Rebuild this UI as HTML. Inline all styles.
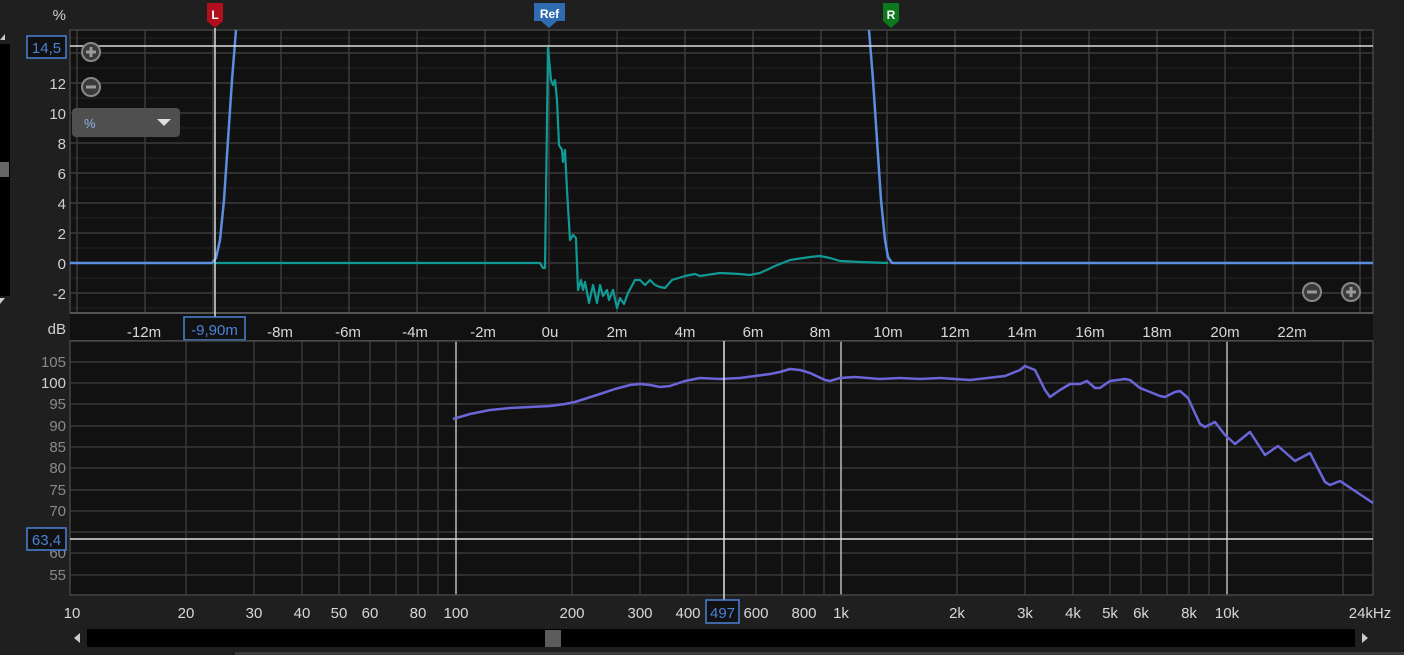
<!DOCTYPE html><html><head><meta charset="utf-8"><style>
body{margin:0;background:#1f1f1f;width:1404px;height:655px;overflow:hidden;font-family:"Liberation Sans",sans-serif}
svg{display:block}
text{font-family:"Liberation Sans",sans-serif}
</style></head><body>
<svg width="1404" height="655" viewBox="0 0 1404 655">
<rect width="1404" height="655" fill="#1f1f1f"/>
<!-- left scrollbar -->
<rect x="0" y="44" width="10" height="252" fill="#000"/>
<rect x="0" y="162" width="9" height="15" fill="#666"/>
<polygon points="0,40 5,34 5,40" fill="#ccc"/>
<polygon points="0,298 5,298 0,304" fill="#ccc"/>
<!-- top plot -->
<rect x="70" y="30" width="1303" height="311" fill="#111"/>
<g stroke="#252525" stroke-width="1">
<line x1="70" x2="1373" y1="38" y2="38"/><line x1="70" x2="1373" y1="68" y2="68"/><line x1="70" x2="1373" y1="98" y2="98"/><line x1="70" x2="1373" y1="128" y2="128"/><line x1="70" x2="1373" y1="158" y2="158"/><line x1="70" x2="1373" y1="188" y2="188"/><line x1="70" x2="1373" y1="218" y2="218"/><line x1="70" x2="1373" y1="248" y2="248"/><line x1="70" x2="1373" y1="278" y2="278"/><line x1="70" x2="1373" y1="308" y2="308"/>
</g>
<g stroke="#3a3a3a" stroke-width="1.5">
<line x1="70" x2="1373" y1="53" y2="53"/><line x1="70" x2="1373" y1="83" y2="83"/><line x1="70" x2="1373" y1="113" y2="113"/><line x1="70" x2="1373" y1="143" y2="143"/><line x1="70" x2="1373" y1="173" y2="173"/><line x1="70" x2="1373" y1="203" y2="203"/><line x1="70" x2="1373" y1="233" y2="233"/><line x1="70" x2="1373" y1="263" y2="263"/><line x1="70" x2="1373" y1="293" y2="293"/>
<line x1="77" x2="77" y1="30" y2="313"/><line x1="145" x2="145" y1="30" y2="313"/><line x1="213" x2="213" y1="30" y2="313"/><line x1="281" x2="281" y1="30" y2="313"/><line x1="349" x2="349" y1="30" y2="313"/><line x1="417" x2="417" y1="30" y2="313"/><line x1="485" x2="485" y1="30" y2="313"/><line x1="549" x2="549" y1="30" y2="313"/><line x1="617" x2="617" y1="30" y2="313"/><line x1="685" x2="685" y1="30" y2="313"/><line x1="753" x2="753" y1="30" y2="313"/><line x1="821" x2="821" y1="30" y2="313"/><line x1="887" x2="887" y1="30" y2="313"/><line x1="955" x2="955" y1="30" y2="313"/><line x1="1021" x2="1021" y1="30" y2="313"/><line x1="1089" x2="1089" y1="30" y2="313"/><line x1="1157" x2="1157" y1="30" y2="313"/><line x1="1225" x2="1225" y1="30" y2="313"/><line x1="1293" x2="1293" y1="30" y2="313"/><line x1="1360" x2="1360" y1="30" y2="313"/>
</g>
<rect x="70" y="30" width="1303" height="283" fill="none" stroke="#444" stroke-width="1.5"/>
<line x1="70" x2="1373" y1="313" y2="313" stroke="#555" stroke-width="2"/>
<line x1="70" x2="1373" y1="341" y2="341" stroke="#555" stroke-width="2"/>
<!-- curves top -->
<polyline fill="none" stroke="#5b8ee0" stroke-width="2.5" points="70,263 212,263 216,258 220,240 224,200 228,140 232,80 236,30"/>
<polyline fill="none" stroke="#5b8ee0" stroke-width="2.5" points="869,30 873,80 877,140 881,200 885,240 888,257 892,263 1373,263"/>
<polyline fill="none" stroke="#0f9a96" stroke-width="2.2" stroke-linejoin="round" points="215,263 540,263 543,268 545,268 548,48 551,80 553,85 555,80 557,100 559,145 562,150 563,162 565,150 567,190 570,240 573,235 576,238 578,290 581,280 583,290 585,282 589,303 593,285 597,303 600,285 603,296 607,290 609,300 613,290 617,308 620,298 624,304 628,293 635,280 640,280 645,285 650,280 655,285 660,287 665,288 672,280 685,276 695,274 700,276 720,273 740,274 750,275 760,273 775,266 790,260 810,257 820,256 830,258 840,261 860,262 888,263"/>
<!-- cursors top -->
<line x1="70" x2="1373" y1="46" y2="46" stroke="#ddd" stroke-width="1.5"/>
<line x1="215" x2="215" y1="28" y2="320" stroke="#ddd" stroke-width="1.5"/>
<!-- markers -->
<path d="M207,3 h16 v18 l-8,7 l-8,-7z" fill="#b0101c"/><text x="215" y="19" fill="#fff" font-size="12" font-weight="bold" text-anchor="middle">L</text>
<path d="M534,3 h31 v18 h-8 l-8,7 l-8,-7 h-7z" fill="#2e6bb0"/><text x="549.5" y="18" fill="#fff" font-size="12" font-weight="bold" text-anchor="middle">Ref</text>
<path d="M883,3 h16 v18 l-8,7 l-8,-7z" fill="#0c7a1c"/><text x="891" y="19" fill="#fff" font-size="12" font-weight="bold" text-anchor="middle">R</text>
<!-- top y labels -->
<g fill="#d0d0d0" font-size="15" text-anchor="end">
<text x="66" y="20">%</text>
<text x="66" y="89">12</text><text x="66" y="119">10</text><text x="66" y="149">8</text><text x="66" y="179">6</text><text x="66" y="209">4</text><text x="66" y="239">2</text><text x="66" y="269">0</text><text x="66" y="299">-2</text>
<text x="66" y="334">dB</text>
</g>
<rect x="27" y="36" width="39" height="22" fill="#111" stroke="#4a82d6" stroke-width="1.5"/>
<text x="46.5" y="53" fill="#4a82d6" font-size="15" text-anchor="middle">14,5</text>
<!-- zoom buttons -->
<g fill="#3a3a3a" stroke="#888" stroke-width="2">
<circle cx="91" cy="52" r="9"/><circle cx="91" cy="87" r="9"/><circle cx="1312" cy="292" r="9"/><circle cx="1351" cy="292" r="9"/>
</g>
<g stroke="#999" stroke-width="3">
<line x1="86" x2="96" y1="52" y2="52"/><line x1="91" x2="91" y1="47" y2="57"/>
<line x1="86" x2="96" y1="87" y2="87"/>
<line x1="1307" x2="1317" y1="292" y2="292"/>
<line x1="1346" x2="1356" y1="292" y2="292"/><line x1="1351" x2="1351" y1="287" y2="297"/>
</g>
<!-- dropdown -->
<rect x="72" y="108" width="108" height="29" rx="4" fill="#4f4f4f"/>
<text x="84" y="128" fill="#8fb4e8" font-size="13">%</text>
<polygon points="157,119 171,119 164,126" fill="#e0e0e0"/>
<!-- top x labels -->
<g fill="#d8d8d8" font-size="15" text-anchor="middle">
<text x="144" y="337">-12m</text><text x="280" y="337">-8m</text><text x="348" y="337">-6m</text><text x="415" y="337">-4m</text><text x="483" y="337">-2m</text><text x="550" y="337">0u</text><text x="617" y="337">2m</text><text x="685" y="337">4m</text><text x="753" y="337">6m</text><text x="820" y="337">8m</text><text x="888" y="337">10m</text><text x="955" y="337">12m</text><text x="1022" y="337">14m</text><text x="1090" y="337">16m</text><text x="1157" y="337">18m</text><text x="1225" y="337">20m</text><text x="1292" y="337">22m</text>
</g>
<rect x="184" y="317" width="61" height="23" fill="#111" stroke="#4a82d6" stroke-width="1.5"/>
<text x="214.5" y="335" fill="#4a82d6" font-size="15" text-anchor="middle">-9,90m</text>
<!-- bottom plot -->
<rect x="70" y="341" width="1303" height="254" fill="#111"/>
<g stroke="#383838" stroke-width="1.5">
<line x1="70" x2="1373" y1="362" y2="362"/><line x1="70" x2="1373" y1="383" y2="383"/><line x1="70" x2="1373" y1="404" y2="404"/><line x1="70" x2="1373" y1="426" y2="426"/><line x1="70" x2="1373" y1="447" y2="447"/><line x1="70" x2="1373" y1="468" y2="468"/><line x1="70" x2="1373" y1="490" y2="490"/><line x1="70" x2="1373" y1="511" y2="511"/><line x1="70" x2="1373" y1="532" y2="532"/><line x1="70" x2="1373" y1="553" y2="553"/><line x1="70" x2="1373" y1="575" y2="575"/>
<line x1="186" x2="186" y1="341" y2="595"/><line x1="254" x2="254" y1="341" y2="595"/><line x1="302" x2="302" y1="341" y2="595"/><line x1="339" x2="339" y1="341" y2="595"/><line x1="370" x2="370" y1="341" y2="595"/><line x1="396" x2="396" y1="341" y2="595"/><line x1="418" x2="418" y1="341" y2="595"/><line x1="438" x2="438" y1="341" y2="595"/>
<line x1="572" x2="572" y1="341" y2="595"/><line x1="640" x2="640" y1="341" y2="595"/><line x1="688" x2="688" y1="341" y2="595"/><line x1="756" x2="756" y1="341" y2="595"/><line x1="782" x2="782" y1="341" y2="595"/><line x1="804" x2="804" y1="341" y2="595"/><line x1="824" x2="824" y1="341" y2="595"/>
<line x1="957" x2="957" y1="341" y2="595"/><line x1="1025" x2="1025" y1="341" y2="595"/><line x1="1073" x2="1073" y1="341" y2="595"/><line x1="1110" x2="1110" y1="341" y2="595"/><line x1="1141" x2="1141" y1="341" y2="595"/><line x1="1167" x2="1167" y1="341" y2="595"/><line x1="1189" x2="1189" y1="341" y2="595"/><line x1="1209" x2="1209" y1="341" y2="595"/><line x1="1343" x2="1343" y1="341" y2="595"/>
</g>
<g stroke="#bbb" stroke-width="1.5">
<line x1="456" x2="456" y1="341" y2="595"/><line x1="841" x2="841" y1="341" y2="595"/><line x1="1227" x2="1227" y1="341" y2="595"/>
</g>
<rect x="70" y="341" width="1303" height="254" fill="none" stroke="#444" stroke-width="1.5"/>
<polyline fill="none" stroke="#6a66d8" stroke-width="2.5" stroke-linejoin="round" points="453,419 470,414 490,410 510,408 550,406 565,404 575,402 600,394 615,389 630,385 640,384 650,385 660,387 670,386 685,381 700,378 720,379 740,378 755,376 770,374 780,372 790,369 800,370 810,373 825,380 830,381 840,378 855,377 880,379 900,378 920,379 940,378 970,380 1005,376 1020,370 1025,366 1035,370 1045,390 1050,397 1060,390 1070,384 1080,384 1087,381 1095,388 1100,388 1110,381 1125,379 1130,380 1140,388 1160,396 1165,397 1175,392 1180,391 1188,398 1200,424 1205,427 1215,422 1225,435 1235,444 1250,432 1265,455 1278,446 1295,461 1310,453 1325,482 1330,485 1340,481 1373,503"/>
<line x1="70" x2="1373" y1="539" y2="539" stroke="#e0e0e0" stroke-width="1.5"/>
<line x1="724" x2="724" y1="341" y2="600" stroke="#e0e0e0" stroke-width="1.5"/>
<!-- dB labels -->
<g fill="#8a8a8a" font-size="15" text-anchor="end">
<text x="66" y="367">105</text><text x="66" y="388" fill="#d0d0d0">100</text><text x="66" y="409">95</text><text x="66" y="431">90</text><text x="66" y="452">85</text><text x="66" y="473">80</text><text x="66" y="495">75</text><text x="66" y="516">70</text><text x="66" y="558">60</text><text x="66" y="580">55</text>
</g>
<rect x="27" y="528" width="39" height="22" fill="#111" stroke="#4a82d6" stroke-width="1.5"/>
<text x="46.5" y="545" fill="#4a82d6" font-size="15" text-anchor="middle">63,4</text>
<!-- freq labels -->
<g fill="#d8d8d8" font-size="15" text-anchor="middle">
<text x="72" y="618">10</text><text x="186" y="618">20</text><text x="254" y="618">30</text><text x="302" y="618">40</text><text x="339" y="618">50</text><text x="370" y="618">60</text><text x="418" y="618">80</text><text x="456" y="618">100</text><text x="572" y="618">200</text><text x="640" y="618">300</text><text x="688" y="618">400</text><text x="756" y="618">600</text><text x="804" y="618">800</text><text x="841" y="618">1k</text><text x="957" y="618">2k</text><text x="1025" y="618">3k</text><text x="1073" y="618">4k</text><text x="1110" y="618">5k</text><text x="1141" y="618">6k</text><text x="1189" y="618">8k</text><text x="1227" y="618">10k</text><text x="1370" y="618">24kHz</text>
</g>
<rect x="706" y="600" width="33" height="23" fill="#111" stroke="#4a82d6" stroke-width="1.5"/>
<text x="722.5" y="618" fill="#4a82d6" font-size="15" text-anchor="middle">497</text>
<!-- bottom scrollbar -->
<rect x="87" y="629" width="1268" height="18" fill="#000"/>
<rect x="545" y="630" width="16" height="17" fill="#5c5c5c"/>
<polygon points="74,638 80,633 80,643" fill="#ccc"/>
<polygon points="1368,638 1362,633 1362,643" fill="#ccc"/>
<rect x="235" y="652" width="1169" height="3" fill="#3a3a3a"/>
</svg>
</body></html>
